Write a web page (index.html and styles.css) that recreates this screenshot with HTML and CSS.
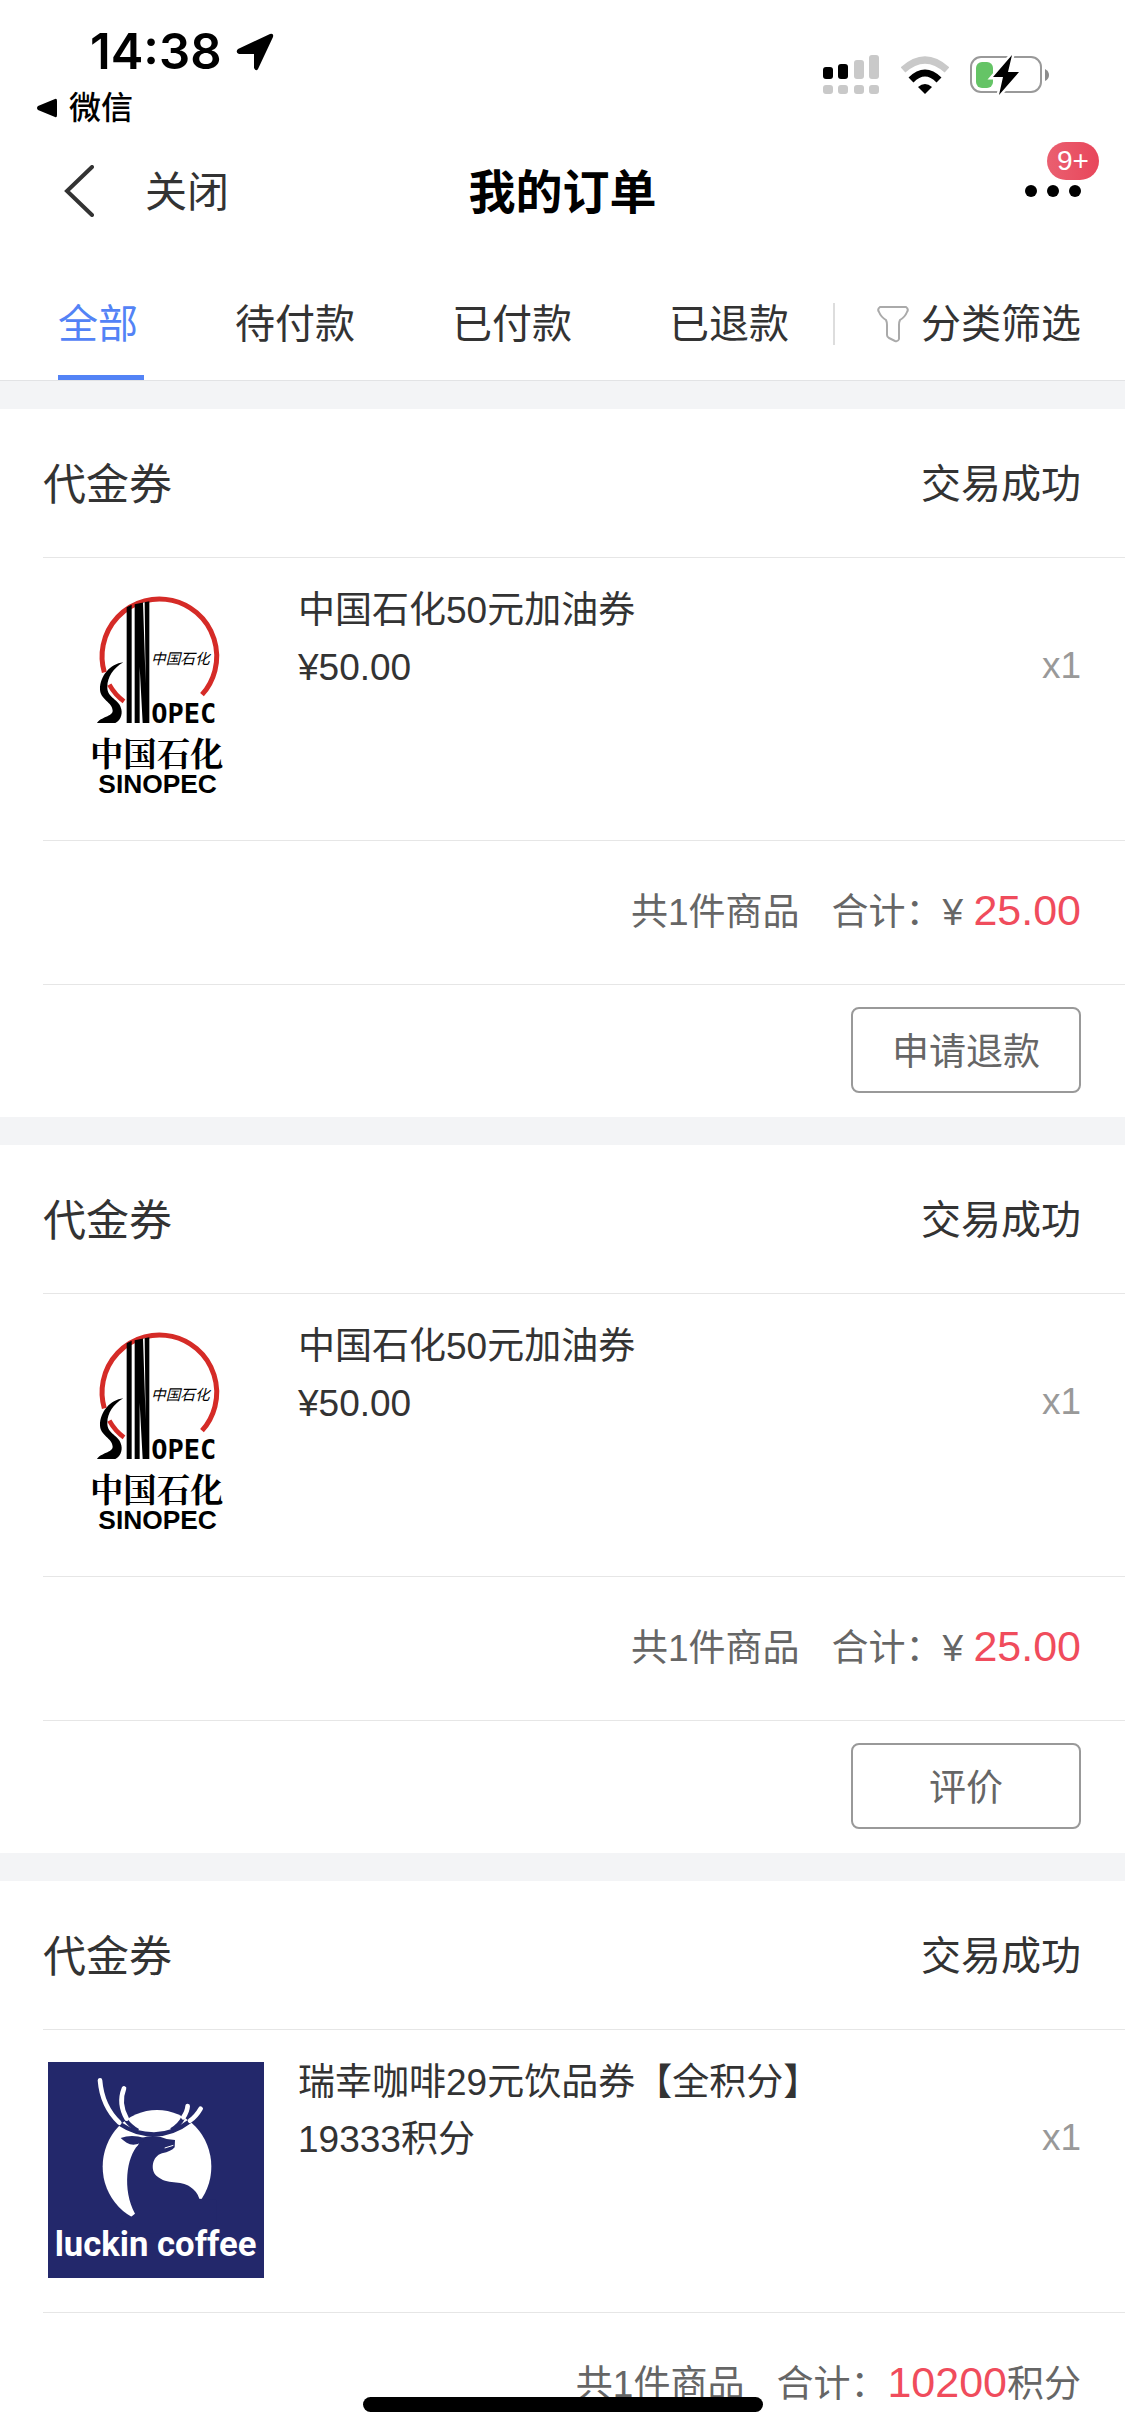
FILE: index.html
```html
<!DOCTYPE html>
<html lang="zh-CN">
<head>
    <meta charset="UTF-8">
    <meta name="viewport" content="width=device-width, initial-scale=1.0">
    <title>我的订单</title>
    <link rel="stylesheet" href="styles.css">
</head>
<body>
    <!-- Shared voucher logo -->
    <svg class="defs" width="0" height="0" aria-hidden="true">
        <symbol id="sinopec" viewBox="-36 60 648 648">
            <path d="M133 307A172 172 0 1 1 426 374" fill="none" stroke="#d52b27" stroke-width="15"/>
            <path d="M148 344Q166 376 192 394" fill="none" stroke="#d52b27" stroke-width="14"/>
            <path d="M190 277C150 282 120 318 120 358C120 388 158 398 158 422C158 440 122 440 111 459L166 459C180 452 188 436 184 418C180 388 140 384 142 350C142 322 160 294 190 277Z"/>
            <path d="M200 112L215 104V459H200ZM224 103L268 94V459H224Z"/>
            <path d="M249 98L254 97L257 340ZM239 290L248 459H239Z" fill="#fff"/>
            <text class="logo-script" x="273" y="282">中国石化</text>
            <text class="logo-mono" x="274" y="458">OPEC</text>
            <text class="logo-cn" x="90" y="587">中国石化</text>
            <text class="logo-en" x="115" y="670">SINOPEC</text>
        </symbol>
    </svg>

    <div class="screen">
        <!-- Status bar -->
        <div class="status-bar">
            <div class="status-left">
                <div class="clock">
                    <span>14:38</span>
                    <svg width="38" height="38" viewBox="0 0 38 38"><path d="M34 1Q38 0 37 4L22 36Q20 39 18 35V21H3Q-1 19 2 16Z"/></svg>
                </div>
                <a class="back-app" href="#">
                    <svg width="20" height="20" viewBox="0 0 20 20"><path d="M18 1Q20 0 20 3V17Q20 20 18 19L1 12Q-1 10 1 8Z"/></svg>
                    微信
                </a>
            </div>
            <div class="status-right">
                <svg width="57" height="40" viewBox="0 0 57 40">
                    <rect x="0" y="12" width="10" height="12" rx="3"/>
                    <rect x="15" y="9" width="10" height="15" rx="3"/>
                    <g fill="#c9c9c9">
                        <rect x="31" y="5" width="10" height="19" rx="3"/>
                        <rect x="46" y="0" width="10" height="24" rx="3"/>
                        <rect x="0" y="30" width="10" height="9" rx="3"/>
                        <rect x="15" y="30" width="10" height="9" rx="3"/>
                        <rect x="31" y="30" width="10" height="9" rx="3"/>
                        <rect x="46" y="30" width="10" height="9" rx="3"/>
                    </g>
                </svg>
                <svg width="48" height="40" viewBox="0 0 48 40">
                    <path d="M2 15Q24 -5 46 15" fill="none" stroke="#c9c9c9" stroke-width="7"/>
                    <path d="M10 25Q24 11 38 25" fill="none" stroke="#000" stroke-width="7"/>
                    <path d="M17 32Q24 26 31 32L24 39Z"/>
                </svg>
                <svg width="80" height="40" viewBox="0 0 80 40">
                    <rect x="1" y="2" width="70" height="35" rx="10" fill="none" stroke="#999" stroke-width="2"/>
                    <path d="M75 14Q79 16 79 20T75 26Z" fill="#8c8c8c"/>
                    <rect x="6" y="7" width="17" height="26" rx="6" fill="#65c466"/>
                    <path d="M42 0L23 22H33L29 40L49 17H38Z" stroke="#fff" stroke-width="5" paint-order="stroke"/>
                </svg>
            </div>
        </div>

        <!-- Title bar -->
        <header class="title-bar">
            <div class="title-left">
                <button class="icon-btn" type="button" aria-label="返回">
                    <svg width="30" height="52" viewBox="0 0 30 52"><path d="M28 2L3 26L28 50" fill="none" stroke="#333" stroke-width="4" stroke-linecap="round"/></svg>
                </button>
                <button class="close-btn" type="button">关闭</button>
            </div>
            <h1>我的订单</h1>
            <div class="title-right">
                <button class="more-btn" type="button" aria-label="更多">
                    <svg width="56" height="12" viewBox="0 0 56 12"><circle cx="6" cy="6" r="6"/><circle cx="28" cy="6" r="6"/><circle cx="50" cy="6" r="6"/></svg>
                    <span class="badge">9+</span>
                </button>
            </div>
        </header>

        <!-- Tabs -->
        <nav class="tabs">
            <div class="tab-list">
                <button class="tab active" type="button">全部</button>
                <button class="tab" type="button">待付款</button>
                <button class="tab" type="button">已付款</button>
                <button class="tab" type="button">已退款</button>
            </div>
            <button class="filter-btn" type="button">
                <svg width="32" height="38" viewBox="0 0 32 38"><path d="M3 2H29Q32 4 30 7Q28 12 23 15Q22 17 22 20V34Q21 37 18 36L12 33Q10 32 10 30V20Q10 17 9 15Q4 12 2 7Q0 4 3 2Z" fill="none" stroke="#aaa" stroke-width="2"/></svg>
                分类筛选
            </button>
        </nav>

        <!-- Orders -->
        <main class="orders">
            <section class="order">
                <div class="order-head">
                    <h2>代金券</h2>
                    <span class="order-status">交易成功</span>
                </div>
                <div class="order-item">
                    <svg class="thumb" role="img" aria-label="中国石化"><use href="#sinopec"/></svg>
                    <div class="item-info">
                        <p>中国石化50元加油券</p>
                        <p>¥50.00</p>
                    </div>
                    <span class="item-count">x1</span>
                </div>
                <div class="order-total">
                    <span>共1件商品</span>
                    <span>合计：¥ <b class="amount">25.00</b></span>
                </div>
                <div class="order-actions">
                    <button class="action-btn" type="button">申请退款</button>
                </div>
            </section>

            <section class="order">
                <div class="order-head">
                    <h2>代金券</h2>
                    <span class="order-status">交易成功</span>
                </div>
                <div class="order-item">
                    <svg class="thumb" role="img" aria-label="中国石化"><use href="#sinopec"/></svg>
                    <div class="item-info">
                        <p>中国石化50元加油券</p>
                        <p>¥50.00</p>
                    </div>
                    <span class="item-count">x1</span>
                </div>
                <div class="order-total">
                    <span>共1件商品</span>
                    <span>合计：¥ <b class="amount">25.00</b></span>
                </div>
                <div class="order-actions">
                    <button class="action-btn" type="button">评价</button>
                </div>
            </section>

            <section class="order">
                <div class="order-head">
                    <h2>代金券</h2>
                    <span class="order-status">交易成功</span>
                </div>
                <div class="order-item">
                    <svg class="thumb" viewBox="54 66 648 648" role="img" aria-label="luckin coffee">
                        <rect x="54" y="66" width="648" height="648" fill="#23286b"/>
                        <ellipse cx="381" cy="380" rx="163" ry="170" fill="#fff"/>
                        <!-- Deer head and body -->
                        <path d="M335 294Q360 284 390 290Q412 300 435 300L434 322Q424 334 396 340C366 348 360 392 380 408C412 436 452 420 480 440Q502 454 508 476L560 480V580H240L315 521C276 450 290 350 324 316Z" fill="#23286b"/>
                        <path d="M272 294Q304 282 344 294L340 304Q312 322 290 308Q280 302 272 294Z" fill="#23286b"/>
                        <path d="M270 252Q316 283 372 283T482 242" fill="none" stroke="#23286b" stroke-width="13"/>
                        <path d="M288 240Q300 258 324 272M460 232Q450 254 424 270" fill="none" stroke="#23286b" stroke-width="12"/>
                        <path d="M404 324L430 316" stroke="#fff" stroke-width="3"/>
                        <!-- Antlers -->
                        <path d="M210 121Q216 198 268 248M282 145Q264 190 290 236M473 198Q472 214 460 232M512 206Q498 230 480 242" fill="none" stroke="#fff" stroke-width="14" stroke-linecap="round"/>
                        <text class="logo-luckin" x="74" y="649">luckin coffee</text>
                    </svg>
                    <div class="item-info">
                        <p>瑞幸咖啡29元饮品券【全积分】</p>
                        <p>19333积分</p>
                    </div>
                    <span class="item-count">x1</span>
                </div>
                <div class="order-total">
                    <span>共1件商品</span>
                    <span>合计：<b class="amount">10200</b>积分</span>
                </div>
            </section>
        </main>

        <div class="home-bar"></div>
    </div>
</body>
</html>
```

FILE: styles.css
```css
* {
    box-sizing: border-box;
}

body {
    font-family: "Liberation Sans", "Noto Sans CJK SC", sans-serif;
    font-size: 37px;
    color: #333;
    background-color: #fff;
    margin: 0;
}

h1, h2, p {
    margin: 0;
    font-weight: normal;
}

button {
    padding: 0;
    border: none;
    background: none;
    color: inherit;
    font: inherit;
    cursor: pointer;
}

svg {
    display: block;
    flex-shrink: 0;
}

.defs {
    position: absolute;
}

.screen {
    display: flex;
    flex-direction: column;
    height: 100vh;
    overflow: hidden;
}

/* Status bar */
.status-bar {
    display: flex;
    justify-content: space-between;
    padding: 24px 75px 0 37px;
    height: 132px;
    color: #000;
}

.clock {
    display: flex;
    align-items: center;
    gap: 14px;
    padding-left: 53px;
    font-family: Inter, "Liberation Sans", sans-serif;
    font-size: 49px;
    font-weight: 600;
    line-height: 56px;
}

.back-app {
    display: flex;
    align-items: center;
    gap: 12px;
    color: #000;
    font-size: 32px;
    font-weight: 500;
    line-height: 56px;
    text-decoration: none;
}

.status-right {
    display: flex;
    gap: 21px;
    padding-top: 31px;
}

/* Title bar */
.title-bar {
    display: flex;
    align-items: center;
    height: 118px;
    padding: 0 44px;
}

.title-left, .title-right {
    display: flex;
    flex: 1;
    align-items: center;
}

.title-left {
    gap: 51px;
}

.title-right {
    justify-content: flex-end;
}

.title-bar h1 {
    padding-bottom: 6px;
    color: #000;
    font-size: 47px;
    font-weight: bold;
}

.icon-btn {
    margin-left: 20px;
}

.close-btn {
    padding-bottom: 6px;
    font-size: 42px;
}

.more-btn {
    position: relative;
}

.badge {
    position: absolute;
    left: 22px;
    bottom: 17px;
    width: 52px;
    border-radius: 19px;
    background: linear-gradient(90deg, #ea5f70, #e8475b);
    color: #fff;
    font-size: 28px;
    line-height: 38px;
    text-align: center;
}

/* Tabs */
.tabs {
    display: flex;
    align-items: center;
    justify-content: space-between;
    height: 131px;
    padding: 18px 44px 0 58px;
    border-bottom: 1px solid #e2e3e5;
    font-size: 40px;
    line-height: 112px;
}

.tab-list {
    display: flex;
    gap: 97px;
}

.tab {
    position: relative;
}

.tab.active {
    color: #5383f6;
}

.tab.active::after {
    content: "";
    position: absolute;
    left: 0;
    bottom: 0;
    width: 86px;
    height: 5px;
    background-color: #5383f6;
}

.filter-btn {
    display: flex;
    align-items: center;
    gap: 12px;
    padding-left: 42px;
    border-left: 2px solid #ddd;
    line-height: 42px;
}

/* Orders */
.orders {
    flex: 1;
    min-height: 0;
    padding-top: 28px;
    overflow: hidden;
    background-color: #f3f4f6;
}

.order {
    margin-bottom: 28px;
    padding-left: 43px;
    background-color: #fff;
}

.order-head, .order-item, .order-total {
    display: flex;
    border-bottom: 1px solid #e6e6e6;
    padding-right: 44px;
}

.order-head {
    align-items: center;
    justify-content: space-between;
    height: 149px;
    padding-bottom: 5px;
}

.order-head h2 {
    font-size: 43px;
}

.order-status {
    font-size: 40px;
}

.order-item {
    height: 283px;
    padding-top: 24px;
    line-height: 57px;
}

.thumb {
    width: 216px;
    height: 216px;
    margin: 8px 34px 0 5px;
}

.item-info {
    flex: 1;
}

.item-count {
    align-self: flex-start;
    margin-top: 55px;
    color: #999;
}

.order-total {
    align-items: center;
    justify-content: flex-end;
    gap: 32px;
    height: 144px;
    padding-bottom: 8px;
    color: #666;
}

.amount {
    color: #f04c5c;
    font-size: 43px;
    font-weight: normal;
}

.order-actions {
    display: flex;
    justify-content: flex-end;
    padding: 22px 44px 24px 0;
}

.action-btn {
    width: 230px;
    height: 86px;
    padding-bottom: 3px;
    border: 2px solid #999;
    border-radius: 8px;
    color: #666;
}

/* Logo lettering */
.logo-script {
    font-size: 44px;
    font-style: italic;
}

.logo-mono {
    font-family: "DejaVu Sans Mono", monospace;
    font-size: 81px;
    font-weight: bold;
}

.logo-cn {
    font-family: "Noto Serif CJK SC", "Noto Sans CJK SC", serif;
    font-size: 100px;
    font-weight: bold;
}

.logo-en {
    font-size: 79px;
    font-weight: bold;
}

.logo-luckin {
    fill: #fff;
    font-family: Roboto, sans-serif;
    font-size: 104px;
    font-weight: bold;
}

.home-bar {
    position: fixed;
    left: 50%;
    bottom: 23px;
    width: 400px;
    height: 15px;
    margin-left: -200px;
    border-radius: 8px;
    background-color: #000;
}
```
